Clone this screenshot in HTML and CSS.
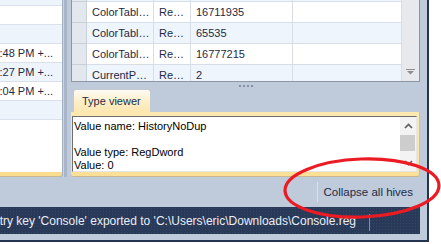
FILE: index.html
```html
<!DOCTYPE html>
<html lang="en">
<head>
  <meta charset="UTF-8" />
  <meta name="viewport" content="width=device-width, initial-scale=1.0" />
  <title>Registry Viewer</title>
  <link rel="stylesheet" href="styles.css">
</head>
<body>
  <div class="window">
    <div class="main">
      <!-- left list (history) -->
      <div class="left-pane">
        <div class="list">
          <div class="list-rows">
            <div class="list-row alt"></div>
            <div class="list-row"></div>
            <div class="list-row alt"></div>
            <div class="list-row"><span>12:51:48 PM +...</span></div>
            <div class="list-row alt"><span>12:52:27 PM +...</span></div>
            <div class="list-row"><span>12:53:04 PM +...</span></div>
            <div class="list-row alt"></div>
          </div>
        </div>
      </div>

      <div class="splitter"></div>

      <div class="right-pane">
        <div class="grid">
          <div class="grid-rows">
            <div class="grid-inner">
              <div class="grid-row alt">
                <div class="cell head"></div>
                <div class="cell">ColorTable12</div>
                <div class="cell">RegDword</div>
                <div class="cell">8388736</div>
                <div class="cell"></div>
              </div>
              <div class="grid-row">
                <div class="cell head"></div>
                <div class="cell">ColorTable13</div>
                <div class="cell">RegDword</div>
                <div class="cell">16711935</div>
                <div class="cell"></div>
              </div>
              <div class="grid-row alt">
                <div class="cell head"></div>
                <div class="cell">ColorTable14</div>
                <div class="cell">RegDword</div>
                <div class="cell">65535</div>
                <div class="cell"></div>
              </div>
              <div class="grid-row">
                <div class="cell head"></div>
                <div class="cell">ColorTable15</div>
                <div class="cell">RegDword</div>
                <div class="cell">16777215</div>
                <div class="cell"></div>
              </div>
              <div class="grid-row alt">
                <div class="cell head"></div>
                <div class="cell">CurrentPage</div>
                <div class="cell">RegDword</div>
                <div class="cell">2</div>
                <div class="cell"></div>
              </div>
            </div>
          </div>
          <div class="vscroll">
            <svg width="9" height="6" viewBox="0 0 9 6">
              <rect x="0" y="0" width="9" height="1" fill="#8e8e8e" />
              <polygon points="1,2 8,2 4.5,5.5" fill="#8e8e8e" />
            </svg>
          </div>
        </div>

        <div class="grip">
          <span></span><span></span><span></span><span></span>
        </div>

        <div class="tabs">
          <div class="tab">Type viewer</div>
        </div>

        <div class="viewer">
          <div class="viewer-box">
            <div class="viewer-text">
              <p>Value name: HistoryNoDup</p>
              <p>&nbsp;</p>
              <p>Value type: RegDword</p>
              <p>Value: 0</p>
            </div>
            <div class="viewer-scroll">
              <div class="scroll-btn">
                <svg width="9" height="6" viewBox="0 0 9 6">
                  <polyline points="1,5 4.5,1.5 8,5" fill="none" stroke="#5f5f5f" stroke-width="1.7" />
                </svg>
              </div>
              <div class="scroll-thumb"></div>
              <div class="scroll-btn bottom">
                <svg width="9" height="6" viewBox="0 0 9 6">
                  <polyline points="1,1 4.5,4.5 8,1" fill="none" stroke="#5f5f5f" stroke-width="1.7" />
                </svg>
              </div>
            </div>
          </div>
        </div>
      </div>
    </div>

    <div class="toolbar">
      <div class="tool-sep"></div>
      <div class="tool-btn">Collapse all hives</div>
    </div>

    <div class="status">
      <div class="status-text"><span>Registry key 'Console' exported to 'C:\Users\eric\Downloads\Console.reg</span></div>
      <div class="status-sep"></div>
      <div class="status-rest"></div>
    </div>
  </div>

  <!-- red annotation ring -->
  <svg class="annotation" width="441" height="244" viewBox="0 0 441 244">
    <ellipse cx="362" cy="188" rx="77" ry="29" transform="rotate(-2 362 188)"
             fill="none" stroke="#ec1b23" stroke-width="3.2" />
  </svg>
</body>
</html>
```

FILE: styles.css
```css
body {
  margin: 0;
  background: #fff;
  font-family: "Liberation Sans", Arial, sans-serif;
  font-size: 11px;
  color: #1f2a44;
  overflow: hidden;
}

.window {
  width: 427px;
  height: 240px;
  background: #bfcadb;
  border-right: 2px solid #24334f;
  border-bottom: 2px solid #24334f;
  display: flex;
  flex-direction: column;
  overflow: hidden;
}

.main {
  display: flex;
  height: 177px;
  padding-right: 7px;
}

/* left list */
.left-pane {
  width: 62px;
  border-right: 1px solid #a3afc1;
  border-bottom: 1px solid #c7b98f;
  border-bottom-right-radius: 3px;
  padding-bottom: 4px;
  background: linear-gradient(#fde9ae, #fcdc8e);
  display: flex;
  flex-direction: column;
}

.list {
  flex: 1;
  background: #fff;
  overflow: hidden;
}

.list-rows {
  margin-top: -13px;
}

.list-row {
  height: 19px;
  box-sizing: border-box;
  border-bottom: 1px solid #d9e1ec;
  display: flex;
  align-items: center;
  justify-content: flex-end;
  padding-right: 9px;
  white-space: nowrap;
  overflow: hidden;
}

.list-row.alt {
  background: #eef4fc;
}

.splitter {
  width: 8px;
  background: linear-gradient(to right, #cbd5e2 0 1px, #a9b6c9 1px 4px, #bfcadb 4px);
}

/* right side */
.right-pane {
  width: 349px;
  display: flex;
  flex-direction: column;
}

.grid {
  height: 81px;
  border: 1px solid #8b96a6;
  border-top: none;
  background: #fff;
  display: flex;
}

.grid-rows {
  flex: 1;
  overflow: hidden;
}

.grid-inner {
  margin-top: -19px;
}

.grid-row {
  display: grid;
  grid-template-columns: 15px 67px 37px 102px 109px;
  height: 21px;
}

.cell {
  box-sizing: border-box;
  border-right: 1px solid #d9dee6;
  border-bottom: 1px solid #d9dee6;
  padding-left: 5px;
  line-height: 20px;
  white-space: nowrap;
  overflow: hidden;
  text-overflow: ellipsis;
}

.grid-row.alt .cell {
  background: #eef5fd;
}

.grid-row .cell.head {
  background: #e3e7ee;
  border-color: #c9d0da;
  padding: 0;
}

.vscroll {
  width: 17px;
  background: #e8e9ec;
  display: flex;
  flex-direction: column;
  justify-content: flex-end;
  align-items: center;
  padding-bottom: 6px;
  box-sizing: border-box;
}

.grip {
  height: 7px;
  display: flex;
  justify-content: center;
  align-items: center;
  gap: 2px;
  padding-left: 1px;
}

.grip span {
  width: 2px;
  height: 2px;
  background: #8393ab;
}

.tabs {
  display: flex;
  height: 23px;
  padding-left: 2px;
}

.tab {
  width: 78px;
  box-sizing: border-box;
  border: 1px solid #c3c9d2;
  border-bottom: none;
  border-radius: 3px 3px 0 0;
  background: linear-gradient(#fefcf5, #fdefcb 50%, #fde7ae);
  padding-left: 8px;
  line-height: 22px;
}

.viewer {
  height: 65px;
  box-sizing: border-box;
  border-right: 1px solid #b8c2d0;
  border-bottom: 1px solid #c7b98f;
  border-radius: 0 0 3px 3px;
  padding: 4px 2px 4px 1px;
  background: linear-gradient(#fde9b0, #fddf96);
  display: flex;
}

.viewer-box {
  flex: 1;
  display: flex;
  background: #fff;
  border-top: 1px solid #6e6e6e;
  border-left: 1px solid #6e6e6e;
  border-right: 1px solid #e6e6e6;
  border-bottom: 1px solid #e6e6e6;
  overflow: hidden;
}

.viewer-text {
  flex: 1;
  color: #000;
  padding: 3px 0 0 1px;
}

.viewer-text p {
  margin: 0;
  line-height: 13px;
  white-space: nowrap;
}

.viewer-scroll {
  width: 16px;
  background: #f3f3f3;
  display: flex;
  flex-direction: column;
}

.scroll-btn {
  height: 17px;
  display: flex;
  align-items: center;
  justify-content: center;
}

.scroll-btn.bottom {
  margin-top: auto;
}

.scroll-thumb {
  height: 16px;
  margin: 1px 1px 0 0;
  background: #cdcdcd;
}

/* bottom strip */
.toolbar {
  height: 30px;
  margin-right: 7px;
  padding-right: 7px;
  display: flex;
  justify-content: flex-end;
  align-items: center;
}

.tool-sep {
  width: 1px;
  height: 20px;
  background: #dbe2ec;
  margin-right: 6px;
}

.tool-btn {
  font-size: 11.5px;
  color: #1e2b45;
}

.status {
  height: 27px;
  margin-right: 7px;
  display: flex;
  background-color: #293a58;
  background-image: radial-gradient(circle, #34476a 0.8px, transparent 1px);
  background-size: 3px 3px;
}

.status-text {
  flex: 1;
  display: flex;
  justify-content: flex-end;
  align-items: center;
  padding-right: 13px;
  overflow: hidden;
  white-space: nowrap;
  font-size: 12px;
  color: #e9eef6;
}

.status-sep {
  width: 1px;
  margin: 7px 0 3px;
  background: #8190a9;
}

.status-rest {
  width: 50px;
}

.annotation {
  position: absolute;
  top: 0;
  left: 0;
  pointer-events: none;
}
```
